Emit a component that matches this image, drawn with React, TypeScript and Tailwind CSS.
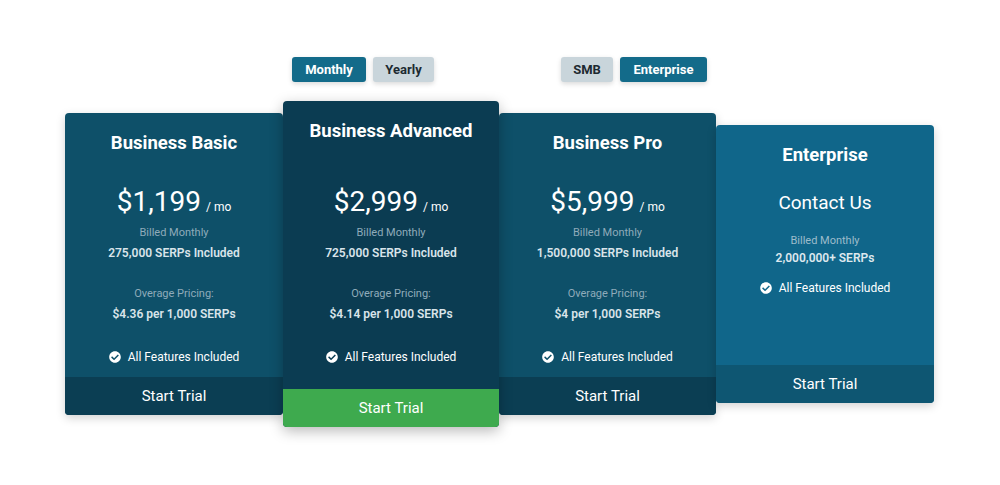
import { FaCheckCircle } from 'react-icons/fa';

interface Plan {
  name: string;
  price: string;
  serps: string;
  overage: string;
}

const PLANS: Record<string, Plan> = {
  basic: { name: 'Business Basic', price: '$1,199', serps: '275,000 SERPs Included', overage: '$4.36 per 1,000 SERPs' },
  advanced: { name: 'Business Advanced', price: '$2,999', serps: '725,000 SERPs Included', overage: '$4.14 per 1,000 SERPs' },
  pro: { name: 'Business Pro', price: '$5,999', serps: '1,500,000 SERPs Included', overage: '$4 per 1,000 SERPs' },
};

function Features({ className }: { className: string }) {
  return (
    <div className={`flex items-center justify-center gap-[7px] text-[12px] leading-[18px] text-white ${className}`}>
      <FaCheckCircle className="w-3 h-3" />
      <span>All Features Included</span>
    </div>
  );
}

function PlanCard({ plan, featured, width = 'w-[217px]' }: { plan: Plan; featured?: boolean; width?: string }) {
  return (
    <div
      className={`${width} flex flex-col rounded-[4px] overflow-hidden text-center ${
        featured
          ? 'h-[326px] bg-[#0b3c52] relative z-10 shadow-[0_4px_14px_rgba(0,0,0,0.28)]'
          : 'h-[302px] bg-[#0e5069] shadow-[0_3px_10px_rgba(0,0,0,0.18)]'
      }`}
    >
      <h2 className="pt-[18px] text-[18.5px] leading-[24px] font-bold text-white">{plan.name}</h2>
      <div className={`${featured ? 'mt-[42px]' : 'mt-[30px]'} flex items-baseline justify-center text-white`}>
        <span className="text-[28px] leading-[34px]">{plan.price}</span>
        <span className="ml-[5px] text-[12px]">/ mo</span>
      </div>
      <p className="mt-[6px] text-[11px] leading-[16px] text-[#8fabba]">Billed Monthly</p>
      <p className="mt-[3px] text-[12px] leading-[18px] font-semibold text-[#d9e4ea]">{plan.serps}</p>
      <p className="mt-[24px] text-[11px] leading-[16px] text-[#8fabba]">Overage Pricing:</p>
      <p className="mt-[3px] text-[12px] leading-[18px] font-semibold text-[#d9e4ea]">{plan.overage}</p>
      <Features className="mt-[25px]" />
      <button
        className={`mt-auto h-[38px] shrink-0 text-[15px] text-white ${featured ? 'bg-[#3eaa4e]' : 'bg-[#0b3e53]'}`}
      >
        Start Trial
      </button>
    </div>
  );
}

function EnterpriseCard() {
  return (
    <div className="w-[218px] h-[278px] flex flex-col rounded-[4px] overflow-hidden text-center bg-[#10668a] shadow-[0_3px_10px_rgba(0,0,0,0.18)]">
      <h2 className="pt-[18px] text-[18.5px] leading-[24px] font-bold text-white">Enterprise</h2>
      <p className="mt-[24px] text-[19px] leading-[24px] text-white">Contact Us</p>
      <p className="mt-[18px] text-[11px] leading-[16px] text-[#9dbccb]">Billed Monthly</p>
      <p className="text-[12px] leading-[18px] font-semibold text-[#dde8ee]">2,000,000+ SERPs</p>
      <Features className="mt-[12px]" />
      <button className="mt-auto h-[38px] shrink-0 text-[15px] text-white bg-[#0e5672]">Start Trial</button>
    </div>
  );
}

function Toggle({ label, active, width }: { label: string; active?: boolean; width: string }) {
  return (
    <button
      className={`${width} h-[25px] rounded-[3px] text-[13px] font-bold shadow-[0_2px_5px_rgba(0,0,0,0.15)] ${
        active ? 'bg-[#136b8a] text-white' : 'bg-[#c9d5db] text-[#1d2a31]'
      }`}
    >
      {label}
    </button>
  );
}

export default function App() {
  return (
    <div className="w-[1000px] h-[485px] bg-white pt-[57px] font-['Roboto',_'Liberation_Sans',_sans-serif]">
      <div className="flex items-center pl-[292px]">
        <div className="flex gap-[7px]">
          <Toggle label="Monthly" active width="w-[74px]" />
          <Toggle label="Yearly" width="w-[61px]" />
        </div>
        <div className="flex gap-[7px] ml-[127px]">
          <Toggle label="SMB" width="w-[52px]" />
          <Toggle label="Enterprise" active width="w-[87px]" />
        </div>
      </div>
      <div className="mt-[19px] flex items-center justify-center pr-[1px]">
        <PlanCard plan={PLANS.basic} width="w-[218px]" />
        <PlanCard plan={PLANS.advanced} featured width="w-[216px]" />
        <PlanCard plan={PLANS.pro} />
        <EnterpriseCard />
      </div>
    </div>
  );
}
